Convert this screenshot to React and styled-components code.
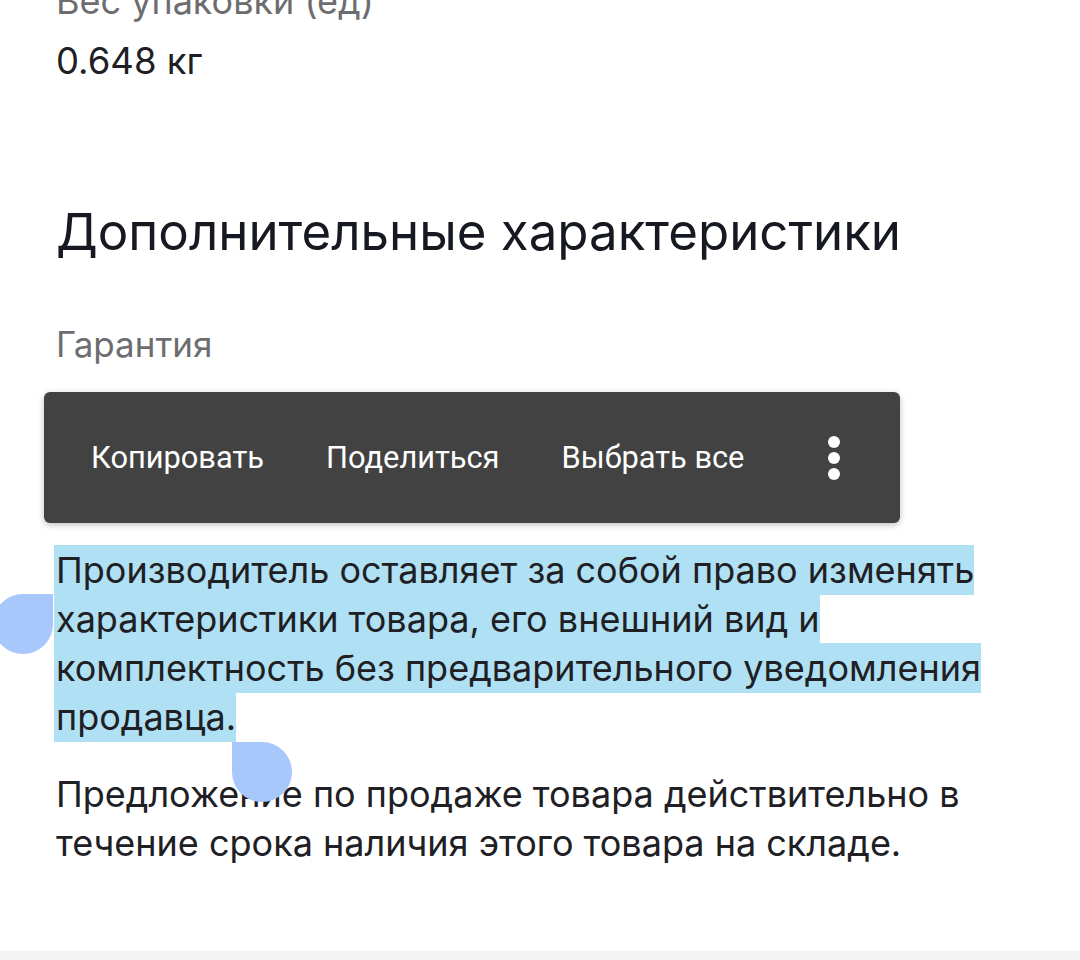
import React from 'react'
import styled, { createGlobalStyle } from 'styled-components'

const GlobalStyle = createGlobalStyle`
  html, body {
    margin: 0;
    padding: 0;
    background: #ffffff;
  }
  body {
    font-family: Inter, 'Noto Sans', sans-serif;
    overflow: hidden;
  }
`

const Page = styled.div`
  position: relative;
  width: 1080px;
  height: 960px;
  overflow: hidden;
  background: #ffffff;
`

const Content = styled.div`
  padding: 0 56px;
`

const Label = styled.div`
  font-size: ${({ $size }) => $size || 36}px;
  line-height: 48px;
  color: #6d6d70;
  margin-top: ${({ $mt }) => $mt || 0}px;
`

const Value = styled.div`
  font-size: 36.5px;
  line-height: 48px;
  color: #202024;
  margin-top: 12px;
`

const Heading = styled.h2`
  margin: 117px 0 0;
  font-size: 51px;
  line-height: 60px;
  font-weight: 400;
  color: #161822;
`

const Paragraph = styled.p`
  margin: ${({ $mt }) => $mt}px 0 0;
  font-size: 36px;
  line-height: 49px;
  color: #202024;
`

const Selected = styled.span`
  background: #b0e0f3;
  padding: 3px 0 3px 2px;
  margin-left: -2px;
  box-decoration-break: clone;
  -webkit-box-decoration-break: clone;
`

const Toolbar = styled.div`
  position: absolute;
  left: 44px;
  top: 392px;
  width: 856px;
  height: 131px;
  box-sizing: border-box;
  padding-left: 16px;
  display: flex;
  align-items: center;
  background: #424242;
  border-radius: 6px;
  box-shadow: 0 2px 6px rgba(0, 0, 0, 0.25);
  z-index: 2;
`

const ToolButton = styled.button`
  border: 0;
  background: none;
  padding: 0 31px;
  height: 100%;
  font-family: Roboto, 'Liberation Sans', sans-serif;
  font-size: 30.8px;
  color: #ffffff;
  cursor: pointer;
`

const MoreButton = styled.button`
  border: 0;
  background: none;
  margin-left: 37px;
  padding: 0 16px;
  height: 100%;
  display: flex;
  flex-direction: column;
  justify-content: center;
  gap: 4px;
  cursor: pointer;
`

const Dot = styled.span`
  width: 12px;
  height: 12px;
  border-radius: 50%;
  background: #ffffff;
`

const Handle = styled.div`
  position: absolute;
  width: 60px;
  height: 60px;
  background: #a8c7fa;
  border-radius: ${({ $side }) => ($side === 'start' ? '50% 0 50% 50%' : '0 50% 50% 50%')};
  left: ${({ $x }) => $x}px;
  top: ${({ $y }) => $y}px;
  z-index: 3;
`

const BottomBand = styled.div`
  margin-top: 83px;
  height: 40px;
  background: #f3f3f4;
`

export default function App() {
  return (
    <Page>
      <GlobalStyle />
      <Content>
        <Label $mt={-23}>Вес упаковки (ед)</Label>
        <Value>0.648 кг</Value>

        <Heading>Дополнительные характеристики</Heading>

        <Label $mt={58} $size={35}>Гарантия</Label>
        <Paragraph $mt={178}>
          <Selected>
            Производитель оставляет за собой право изменять характеристики товара, его внешний вид и
            комплектность без предварительного уведомления продавца.
          </Selected>
        </Paragraph>
        <Paragraph $mt={28}>
          Предложение по продаже товара действительно в течение срока наличия этого товара на складе.
        </Paragraph>
      </Content>
      <BottomBand />

      <Toolbar>
        <ToolButton>Копировать</ToolButton>
        <ToolButton>Поделиться</ToolButton>
        <ToolButton>Выбрать все</ToolButton>
        <MoreButton aria-label="Ещё">
          <Dot />
          <Dot />
          <Dot />
        </MoreButton>
      </Toolbar>

      <Handle $side="start" $x={-7} $y={594} />
      <Handle $side="end" $x={232} $y={742} />
    </Page>
  )
}
